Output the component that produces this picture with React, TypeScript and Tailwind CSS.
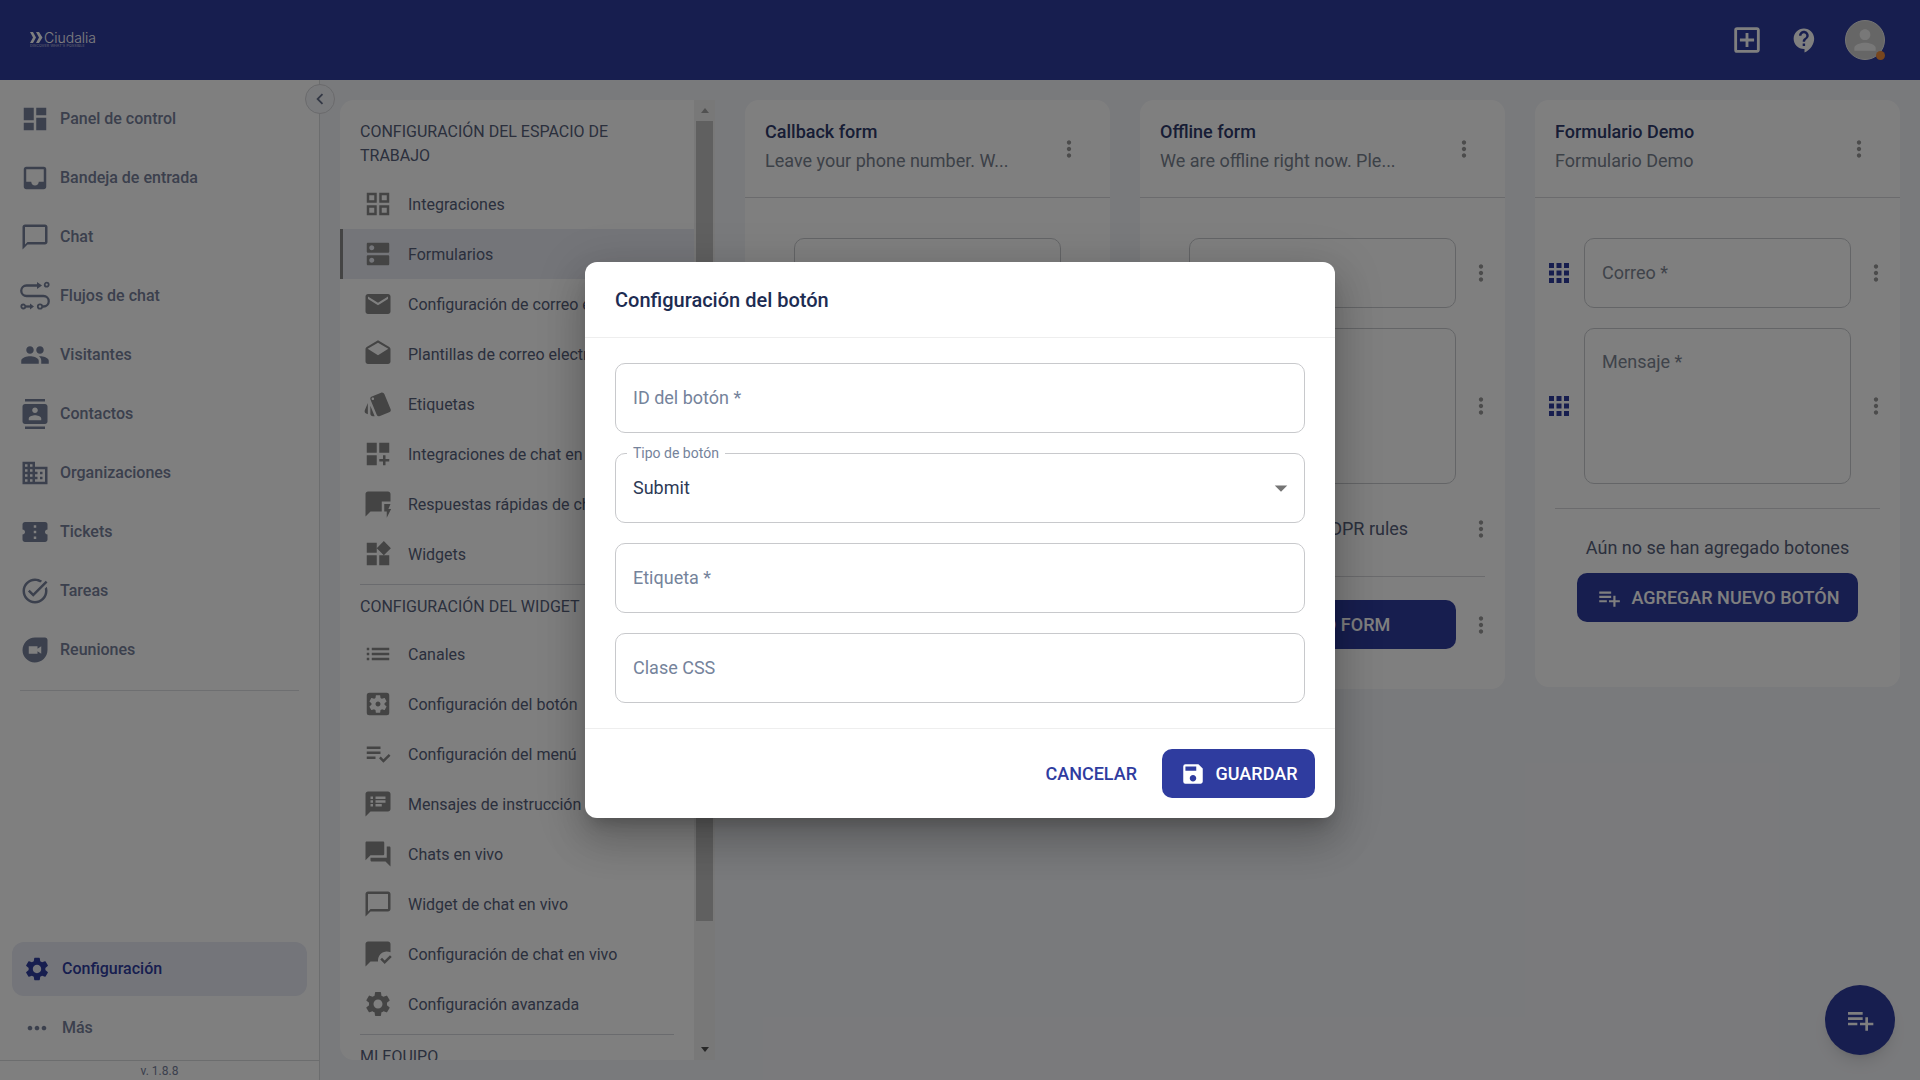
import React from "react";
import {
  MdDashboard, MdInbox, MdChatBubbleOutline, MdPeople, MdContacts, MdDomain, MdConfirmationNumber, MdTaskAlt, MdDuo,
  MdSettings, MdMoreHoriz, MdGridView, MdDns, MdEmail, MdDrafts, MdStyle, MdDashboardCustomize, MdQuickreply, MdWidgets,
  MdList, MdSettingsApplications, MdPlaylistAddCheck, MdSpeakerNotes, MdForum, MdMarkChatRead, MdSave, MdPlaylistAdd,
  MdMoreVert, MdApps, MdOutlineAddBox, MdContactSupport, MdPerson, MdChevronLeft, MdArrowDropDown,
} from "react-icons/md";

function FlowIcon() {
  return (
    <svg width="30" height="30" viewBox="0 0 30 30" fill="none" stroke="currentColor" strokeWidth="2.3">
      <path d="M18 4.5H6.5a5 5 0 0 0 0 10.5h17a5 5 0 0 1 0 10.5h-1" />
      <path d="M17 1l5 3.5-5 3.5z" fill="currentColor" stroke="none" />
      <circle cx="26.7" cy="3.7" r="2" strokeWidth="1.8" />
      <circle cx="3.3" cy="25.5" r="2" strokeWidth="1.8" />
      <path d="M5.5 25.5h5" />
      <path d="M10 22.5l4 3-4 3z" fill="currentColor" stroke="none" />
      <circle cx="20" cy="25.5" r="2.2" strokeWidth="1.8" />
    </svg>
  );
}

const sideItems: [React.ReactNode, string][] = [
  [<MdDashboard size={30} />, "Panel de control"],
  [<MdInbox size={30} />, "Bandeja de entrada"],
  [<MdChatBubbleOutline size={30} />, "Chat"],
  [<FlowIcon />, "Flujos de chat"],
  [<MdPeople size={30} />, "Visitantes"],
  [<MdContacts size={30} />, "Contactos"],
  [<MdDomain size={30} />, "Organizaciones"],
  [<MdConfirmationNumber size={30} />, "Tickets"],
  [<MdTaskAlt size={30} />, "Tareas"],
  [<MdDuo size={30} />, "Reuniones"],
];

function SideRow({ icon, label }: { icon: React.ReactNode; label: string }) {
  return (
    <div className="flex h-[59px] items-center gap-[10px] pl-5 text-[#76809a]">
      <span className="flex h-[30px] w-[30px] items-center justify-center">{icon}</span>
      <span className="text-base font-medium">{label}</span>
    </div>
  );
}

function PanelRow({ icon, label, active }: { icon: React.ReactNode; label: string; active?: boolean }) {
  return (
    <div className={`flex items-center gap-[15px] border-l-[3px] py-[10px] pl-5 pr-3 ${active ? "border-[#888888] bg-[#e9ebf3]" : "border-transparent"}`}>
      <span className="flex h-[30px] w-[30px] shrink-0 items-center justify-center text-[#888888]">{icon}</span>
      <span className="text-base leading-[25px] text-[#56607a]">{label}</span>
    </div>
  );
}

function PanelHead({ children, className }: { children: React.ReactNode; className: string }) {
  return <div className={`px-5 text-base leading-6 text-[#56607a] ${className}`}>{children}</div>;
}

function Rule() {
  return <div className="mx-5 mt-[5px] h-px bg-[#d4d6dc]" />;
}

function Kebab() {
  return (
    <span className="flex h-[30px] w-[30px] items-center justify-center text-[#999999]">
      <MdMoreVert size={26} />
    </span>
  );
}

function Field({ label, tall }: { label: string; tall?: boolean }) {
  return (
    <div className="grid grid-cols-[30px_1fr_30px] items-center gap-[10px]">
      <span className="text-[#2f3c9f]"><MdApps size={30} /></span>
      <div className={`rounded-[10px] border border-[#c9cbcf] px-[17px] text-lg text-[#7e8794] ${tall ? "h-[156px] pt-[19px]" : "flex h-[70px] items-center"}`}>
        {label}
      </div>
      <Kebab />
    </div>
  );
}

function CardHead({ title, sub }: { title: string; sub: string }) {
  return (
    <div className="flex h-[98px] items-center border-b border-[#d6d7db] pl-5 pr-[26px]">
      <div className="min-w-0 flex-1 pb-[6px]">
        <div className="text-lg leading-[29px] font-medium text-[#2f3a6b]">{title}</div>
        <div className="text-lg leading-[29px] text-[#79828f]">{sub}</div>
      </div>
      <Kebab />
    </div>
  );
}

function FormCard({ title, sub, labels }: { title: string; sub: string; labels: [string, string] }) {
  return (
    <div className="rounded-[14px] bg-white">
      <CardHead title={title} sub={sub} />
      <div className="flex flex-col gap-[20px] px-[9px] pt-10">
        <Field label={labels[0]} />
        <Field label={labels[1]} tall />
      </div>
      <div className="grid grid-cols-[30px_1fr_30px] items-center gap-[10px] px-[9px] pt-[22px]">
        <span />
        <div className="flex h-[46px] items-center gap-[12px] text-lg text-[#56607a]">
          <span className="h-[20px] w-[20px] rounded border border-[#999999]" />
          I agree with GDPR rules
        </div>
        <Kebab />
      </div>
      <div className="mx-5 mt-[24px] h-px bg-[#d6d7db]" />
      <div className="grid grid-cols-[30px_1fr_30px] items-center gap-[10px] px-[9px] pt-[23px] pb-10">
        <span />
        <div className="flex h-[49px] items-center justify-center gap-[10px] rounded-[10px] bg-[#2f3c9f] text-lg font-medium text-white">
          <MdPlaylistAdd size={26} />
          SEND FORM
        </div>
        <Kebab />
      </div>
    </div>
  );
}

function DialogField({ label }: { label: string }) {
  return (
    <div className="flex h-[70px] items-center rounded-[10px] border border-[#c8c9cc] px-[17px] text-lg text-[#75839b]">
      {label}
    </div>
  );
}

export default function App() {
  return (
    <div className="relative flex h-screen w-full flex-col overflow-hidden bg-[#f3f4f8] font-['Roboto',sans-serif]">
      <header className="flex h-20 shrink-0 items-center justify-between bg-[#2f3c9f] pl-[30px] pr-[35px]">
        <div className="flex flex-col text-white">
          <div className="flex items-center gap-[1px]">
            <svg width="13" height="11" viewBox="0 0 13 11" fill="currentColor">
              <path d="M0 0h3l3 5.5L3 11H0l3-5.500zM6 0h3l3.500 5.500L9 11H6l3-5.500z" />
            </svg>
            <span className="font-['Inter',sans-serif] text-[14px] leading-[13px] font-light">Ciudalia</span>
          </div>
          <span className="font-['Inter',sans-serif] text-[3.500px] leading-[5px] tracking-[0.2px] opacity-70">DISCOVER WHAT'S POSSIBLE</span>
        </div>
        <div className="flex items-center gap-[26px] text-white">
          <MdOutlineAddBox size={34} />
          <MdContactSupport size={29} />
          <div className="relative flex h-10 w-10 items-center justify-center rounded-full border border-[#e8e8e8] bg-[#cdcdcd]">
            <MdPerson size={32} className="text-[#f1f1f1]" />
            <span className="absolute right-[-1px] bottom-[-1px] h-[9px] w-[9px] rounded-full bg-[#ee8c3c]" />
          </div>
        </div>
      </header>

      <div className="flex min-h-0 flex-1">
        <aside className="relative flex w-80 shrink-0 flex-col border-r border-[#d9dadd] bg-white">
          <div className="pt-[9px]">
            {sideItems.map(([icon, label]) => (
              <SideRow key={label} icon={icon} label={label} />
            ))}
          </div>
          <div className="mx-5 mt-[11px] h-px bg-[#dddee2]" />
          <div className="flex-1" />
          <div className="mx-3 flex h-[54px] w-[295px] items-center gap-[11px] rounded-xl bg-[#e8eaf4] pl-[11px] text-[#2f3c9f]">
            <MdSettings size={28} />
            <span className="text-base font-medium">Configuración</span>
          </div>
          <div className="flex h-[64px] items-center gap-[11px] pl-[23px] text-[#76809a]">
            <MdMoreHoriz size={28} />
            <span className="text-base font-medium">Más</span>
          </div>
          <div className="flex h-5 items-center justify-center border-t border-[#d9dadd] text-xs text-[#76809a]">v. 1.8.8</div>
          <div className="absolute top-[4px] right-[-16px] flex h-[30px] w-[30px] items-center justify-center rounded-full border border-[#d4d5d9] bg-[#f3f4f8] text-[#66708a]">
            <MdChevronLeft size={22} />
          </div>
        </aside>

        <div className="flex min-w-0 flex-1 gap-[30px] pt-5 pr-5 pb-5 pl-5">
          <div className="flex h-[960px] w-[375px] shrink-0">
            <nav className="w-[354px] overflow-hidden rounded-l-[14px] bg-white">
              <PanelHead className="mb-[11px] pt-5">CONFIGURACIÓN DEL ESPACIO DE TRABAJO</PanelHead>
              <PanelRow icon={<MdGridView size={30} />} label="Integraciones" />
              <PanelRow active icon={<MdDns size={30} />} label="Formularios" />
              <PanelRow icon={<MdEmail size={30} />} label="Configuración de correo electrónico" />
              <PanelRow icon={<MdDrafts size={30} />} label="Plantillas de correo electrónico" />
              <PanelRow icon={<MdStyle size={30} />} label="Etiquetas" />
              <PanelRow icon={<MdDashboardCustomize size={30} />} label="Integraciones de chat en vivo" />
              <PanelRow icon={<MdQuickreply size={30} />} label="Respuestas rápidas de chat en vivo" />
              <PanelRow icon={<MdWidgets size={30} />} label="Widgets" />
              <Rule />
              <PanelHead className="pt-[10px] pb-[10px] whitespace-nowrap">CONFIGURACIÓN DEL WIDGET</PanelHead>
              <PanelRow icon={<MdList size={30} />} label="Canales" />
              <PanelRow icon={<MdSettingsApplications size={30} />} label="Configuración del botón" />
              <PanelRow icon={<MdPlaylistAddCheck size={30} />} label="Configuración del menú" />
              <PanelRow icon={<MdSpeakerNotes size={30} />} label="Mensajes de instrucción" />
              <PanelRow icon={<MdForum size={30} />} label="Chats en vivo" />
              <PanelRow icon={<MdChatBubbleOutline size={30} />} label="Widget de chat en vivo" />
              <PanelRow icon={<MdMarkChatRead size={30} />} label="Configuración de chat en vivo" />
              <PanelRow icon={<MdSettings size={30} />} label="Configuración avanzada" />
              <Rule />
              <PanelHead className="pt-[10px]">MI EQUIPO</PanelHead>
            </nav>
            <div className="flex w-[21px] flex-col items-center bg-[#f1f1f1] px-[2px]">
              <div className="flex h-[21px] items-center justify-center">
                <span className="h-0 w-0 border-x-[4px] border-b-[5px] border-x-transparent border-b-[#a3a3a3]" />
              </div>
              <div className="h-[800px] w-[17px] bg-[#c1c1c1]" />
              <div className="flex-1" />
              <div className="flex h-[21px] items-center justify-center">
                <span className="h-0 w-0 border-x-[4px] border-t-[5px] border-x-transparent border-t-[#505050]" />
              </div>
            </div>
          </div>

          <div className="grid min-w-0 flex-1 grid-cols-3 items-start gap-[30px]">
            <FormCard title="Callback form" sub="Leave your phone number. W..." labels={["Nombre *", "Teléfono *"]} />
            <FormCard title="Offline form" sub="We are offline right now. Ple..." labels={["Correo *", "Mensaje *"]} />
            <div className="h-[587px] rounded-[14px] bg-white">
              <CardHead title="Formulario Demo" sub="Formulario Demo" />
              <div className="flex flex-col gap-[20px] px-[9px] pt-10">
                <Field label="Correo *" />
                <Field label="Mensaje *" tall />
              </div>
              <div className="mx-5 mt-[24px] h-px bg-[#d6d7db]" />
              <div className="pt-[25px] text-center text-lg leading-7 text-[#56607a]">Aún no se han agregado botones</div>
              <div className="mx-auto mt-[11px] flex h-[49px] w-[281px] items-center justify-center gap-[10px] rounded-[10px] bg-[#2f3c9f] text-lg font-medium text-white">
                <MdPlaylistAdd size={26} />
                AGREGAR NUEVO BOTÓN
              </div>
            </div>
          </div>
        </div>
      </div>

      <div className="absolute right-[25px] bottom-[25px] flex h-[70px] w-[70px] items-center justify-center rounded-full bg-[#2f3c9f] text-white shadow-lg">
        <MdPlaylistAdd size={32} />
      </div>

      <div className="absolute inset-0 flex items-center justify-center bg-black/50">
        <div className="flex h-[556px] w-[750px] flex-col rounded-xl bg-white shadow-[0_11px_15px_-7px_rgba(0,0,0,0.2),0_24px_38px_3px_rgba(0,0,0,0.14),0_9px_46px_8px_rgba(0,0,0,0.12)]">
          <div className="flex h-[76px] items-center border-b border-[#eeeeee] px-[30px] text-[20px] font-medium text-[#1d2c52]">
            Configuración del botón
          </div>
          <div className="flex flex-1 flex-col gap-[20px] px-[30px] pt-[25px]">
            <DialogField label="ID del botón *" />
            <div className="relative flex h-[70px] items-center justify-between rounded-[10px] border border-[#c8c9cc] pr-[8px] pl-[17px] text-lg text-[#2d3a55]">
              Submit
              <MdArrowDropDown size={30} className="text-[#757575]" />
              <span className="absolute top-[-10px] left-[11px] bg-white px-[6px] text-sm leading-[18px] text-[#75839b]">Tipo de botón</span>
            </div>
            <DialogField label="Etiqueta *" />
            <DialogField label="Clase CSS" />
          </div>
          <div className="flex h-[90px] items-center justify-end gap-[25px] border-t border-[#eeeeee] pr-5">
            <span className="text-lg font-medium text-[#2f3c9f]">CANCELAR</span>
            <div className="flex h-[49px] w-[153px] items-center justify-center gap-[10px] rounded-[10px] bg-[#2f3c9f] text-lg font-medium text-white">
              <MdSave size={26} />
              GUARDAR
            </div>
          </div>
        </div>
      </div>
    </div>
  );
}
